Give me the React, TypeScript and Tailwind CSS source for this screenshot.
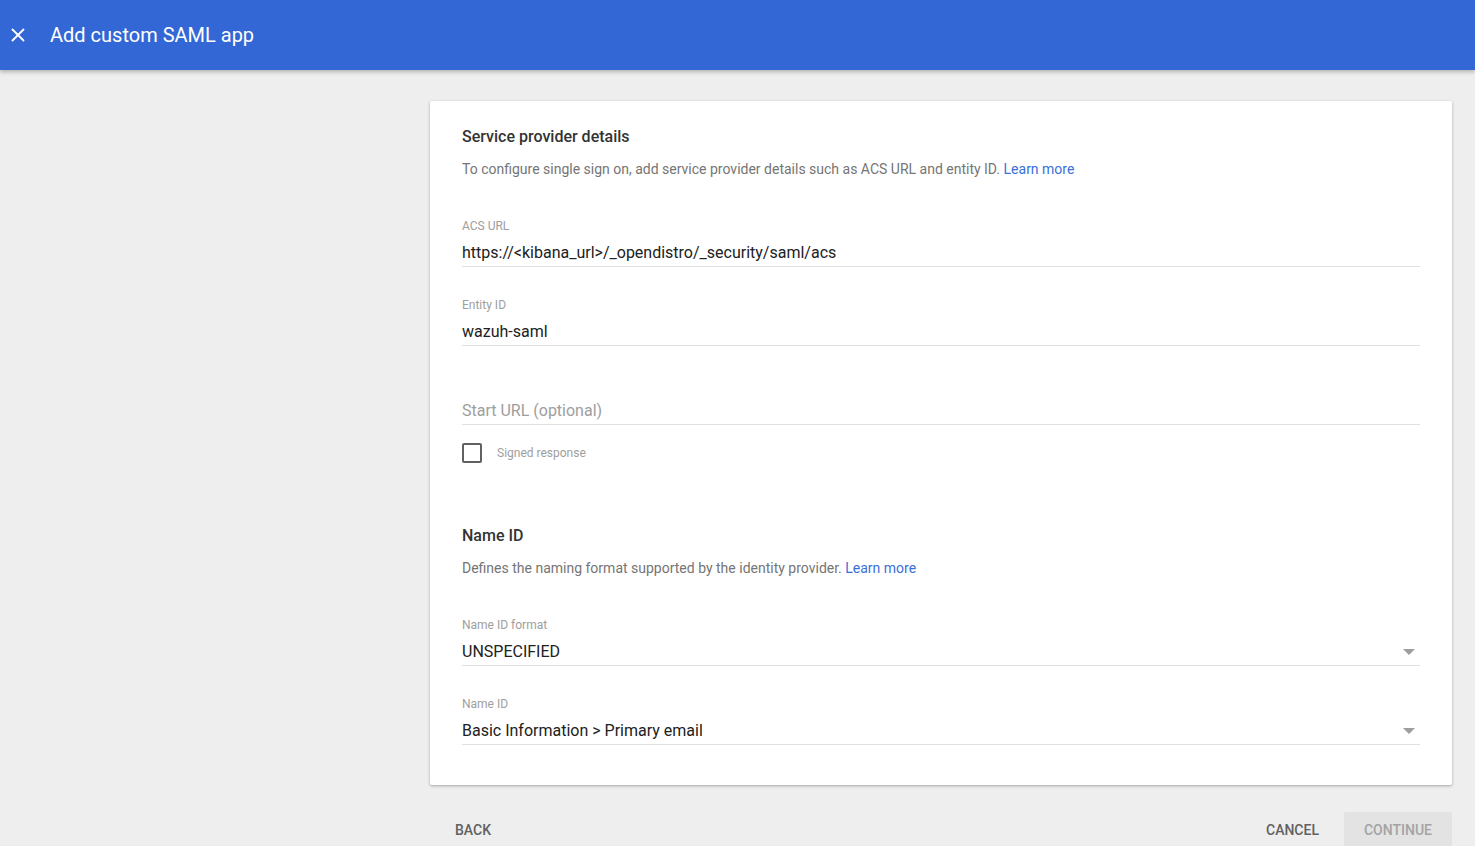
import { X } from 'lucide-react';

function Field({ label, value, select }: { label: string; value: string; select?: boolean }) {
  return (
    <div>
      <div className="text-[12px] leading-4 text-[#9e9e9e]">{label}</div>
      <div className="mt-[7px] flex items-center justify-between border-b border-[#e0e0e0] pb-[1px]">
        <span className="text-[16px] leading-6 text-[#212121]">{value}</span>
        {select && (
          <svg width="12" height="6" viewBox="0 0 12 6" className="mr-[5px]">
            <path d="M0 0h12L6 6z" fill="#9e9e9e" />
          </svg>
        )}
      </div>
    </div>
  );
}

export default function App() {
  return (
    <div className="min-h-screen bg-[#eeeeee] font-['Roboto',sans-serif]">
      {/* Header */}
      <header className="relative z-10 flex h-[70px] items-center bg-[#3367d6] shadow-[0_2px_4px_rgba(0,0,0,0.25)]">
        <X size={22} strokeWidth={2} className="ml-[7px] text-white" />
        <h1 className="ml-[21px] text-[20px] leading-7 text-white">Add custom SAML app</h1>
      </header>

      <div className="flex pr-[23px]">
        <div className="w-[430px] shrink-0" />
        <div className="flex-1">
          {/* Card */}
          <div className="mt-[31px] rounded-[2px] bg-white px-8 pt-[24px] pb-[40px] shadow-[0_1px_3px_rgba(0,0,0,0.3)]">
            <h2 className="text-[16px] font-medium leading-6 text-[#333333]">Service provider details</h2>
            <p className="mt-[10px] text-[14px] leading-5 text-[#757575]">
              To configure single sign on, add service provider details such as ACS URL and entity ID.{' '}
              <a className="text-[#3b6fd8]">Learn more</a>
            </p>

            <div className="mt-[39px]">
              <Field label="ACS URL" value="https://<kibana_url>/_opendistro/_security/saml/acs" />
            </div>
            <div className="mt-[30px]">
              <Field label="Entity ID" value="wazuh-saml" />
            </div>

            <div className="mt-[53px] border-b border-[#e0e0e0] pb-[1px]">
              <span className="text-[16px] leading-6 text-[#9e9e9e]">Start URL (optional)</span>
            </div>

            <label className="mt-[18px] flex items-center">
              <span className="h-5 w-5 rounded-[2px] border-2 border-[#616161]" />
              <span className="ml-[15px] text-[12px] leading-4 text-[#9e9e9e]">Signed response</span>
            </label>

            <h2 className="mt-[61px] text-[16px] font-medium leading-6 text-[#333333]">Name ID</h2>
            <p className="mt-[10px] text-[14px] leading-5 text-[#757575]">
              Defines the naming format supported by the identity provider.{' '}
              <a className="text-[#3b6fd8]">Learn more</a>
            </p>

            <div className="mt-[39px]">
              <Field label="Name ID format" value="UNSPECIFIED" select />
            </div>
            <div className="mt-[30px]">
              <Field label="Name ID" value="Basic Information > Primary email" select />
            </div>
          </div>

          {/* Actions */}
          <div className="mt-[27px] flex items-center justify-between">
            <button className="ml-[9px] h-9 px-4 text-[14px] font-medium uppercase text-[#616161]">Back</button>
            <div className="flex items-center gap-[9px]">
              <button className="h-9 px-4 text-[14px] font-medium uppercase text-[#616161]">Cancel</button>
              <button className="h-9 rounded-[2px] bg-[#e3e3e3] px-5 text-[14px] font-medium uppercase text-[#a3a3a3]">
                Continue
              </button>
            </div>
          </div>
        </div>
      </div>
    </div>
  );
}
